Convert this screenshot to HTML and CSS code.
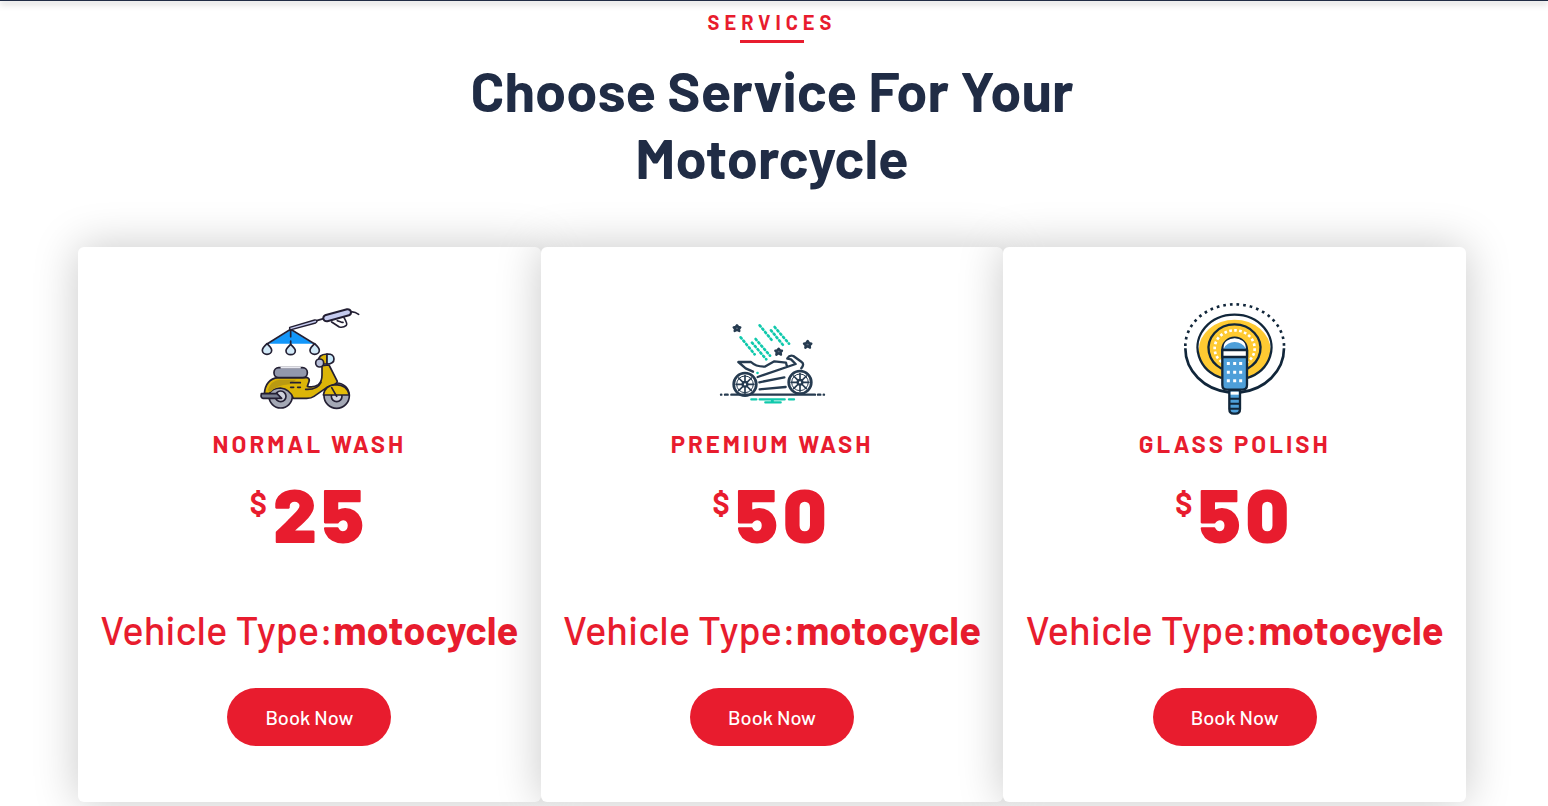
FILE: index.html
```html
<!DOCTYPE html>
<html lang="en">
<head>
<meta charset="utf-8">
<meta name="viewport" content="width=device-width, initial-scale=1">
<title>Services</title>
<link rel="stylesheet" href="styles.css">
</head>
<body>
<div class="topbar"></div>
<main class="services">
  <header class="section-header">
    <p class="eyebrow">SERVICES</p>
    <h2 class="heading">Choose Service For Your Motorcycle</h2>
  </header>
  <div class="cards">
    <article class="card">
      <svg class="icon" viewBox="-9 0 375 375" fill="none" stroke="#231f33" stroke-width="5" stroke-linecap="round" stroke-linejoin="round" aria-hidden="true">
        <path d="M122 105L55 146H190Z" fill="#1397fa" stroke="none"/>
        <path d="M122 103L51 147M122 103L194 147M122 105V125M122 138V150"/>
        <path d="M119 97L194 75Q200 74 201 79Q201 82 197 84L124 104Q117 103 119 97Z" fill="#c5cbef" stroke-width="4"/>
        <path d="M200 77L223 70M301 52Q311 48 326 58" stroke-width="5"/>
        <path d="M245 81L268 96Q280 99 289 91Q293 86 282 68M262 77L271 80Q275 83 279 82" fill="#fff" stroke-width="5"/>
        <path d="M225 61L291 43Q300 42 303 50Q304 58 297 61L232 79Q223 80 220 72Q219 64 225 61Z" fill="#c5cbef" stroke-width="6"/>
        <g fill="#d1e9f8" stroke-width="5">
          <path d="M51 146Q37 159 37 166A14 12 0 0 0 65 166Q65 159 51 146Z"/>
          <path d="M122 148Q108 161 108 167A14 12 0 0 0 136 167Q136 161 122 148Z"/>
          <path d="M194 146Q180 159 180 166A14 12 0 0 0 208 166Q208 159 194 146Z"/>
        </g>
        <circle cx="92" cy="304" r="35" fill="#a4a8b5"/>
        <circle cx="92" cy="304" r="16" fill="#cfd1db"/>
        <circle cx="260" cy="302" r="38" fill="#a4a8b5"/>
        <circle cx="260" cy="304" r="16" fill="#d3d5de"/>
        <path d="M43 296Q47 252 84 248H173Q180 252 177 260L172 274Q191 279 205 269Q216 260 216 240V212L237 210L262 259Q262 264 254 268L234 275L192 304Q184 310 170 310H130Q120 282 91 279Q65 281 58 296Z" fill="#dcb508"/>
        <path d="M53 286Q63 255 91 254H139L119 268Q80 270 62 291Z" fill="#b99a12" stroke="none"/>
        <path d="M220 300Q224 271 257 269Q292 270 298 300Z" fill="#e4bd09"/>
        <path d="M245 278L260 304"/>
        <path d="M34 296H81L95 310H39Q31 309 34 296Z" fill="#777d90"/>
        <rect x="72" y="218" width="100" height="30" rx="14" fill="#9298ac"/>
        <path d="M94 218H150" stroke="#e8e9f1"/>
        <path d="M122 263H151M143 277H151M122 277H131M167 283Q202 285 213 262"/>
        <path d="M206 199Q204 178 231 177V207H216Z" fill="#dcb508"/>
        <path d="M231 177Q252 176 252 192Q252 207 231 207Z" fill="#c7e8fa"/>
        <circle cx="209" cy="204" r="12" fill="#b8bfd8"/>
      </svg>
      <h3 class="title">NORMAL WASH</h3>
      <p class="price"><span class="currency">$</span>25</p>
      <p class="vehicle">Vehicle Type:<strong>motocycle</strong></p>
      <a class="book" href="#book">Book Now</a>
    </article>
    <article class="card">
      <svg class="icon" viewBox="-3 0 375 375" fill="none" stroke="#263b50" stroke-width="7" stroke-linecap="round" stroke-linejoin="round" aria-hidden="true">
        <g stroke="#10c9ac" stroke-width="8" stroke-dasharray="4 9">
          <path d="M149 91L190 141M183 106L224 156M194 96L237 146M92 127L134 178M126 143L169 193M137 132L180 182"/>
        </g>
        <g fill="#596779" stroke-width="7">
          <path d="M81 91L85 96L91 97L87 102L88 108L81 105L74 108L75 102L71 97L77 96Z"/>
          <path d="M206 161L210 166L216 167L212 172L213 179L206 175L199 179L200 172L196 167L202 166Z"/>
          <path d="M293 138L297 144L304 146L299 151L300 158L293 154L286 158L287 151L282 146L289 144Z"/>
        </g>
        <circle cx="105" cy="268" r="34" stroke-width="8"/>
        <circle cx="105" cy="268" r="25" stroke-width="3"/>
        <circle cx="105" cy="268" r="7"/>
        <path d="M105 261V241M105 275V295M98 268H78M112 268H132M100 263L86 249M110 273L124 287M110 263L124 249M100 273L86 287" stroke-width="5"/>
        <circle cx="270" cy="262" r="34" stroke-width="8"/>
        <circle cx="270" cy="262" r="25" stroke-width="3"/>
        <circle cx="270" cy="262" r="7"/>
        <path d="M270 255V235M270 269V289M263 262H243M277 262H297M265 257L251 243M275 267L289 281M275 257L289 243M265 267L251 281" stroke-width="5"/>
        <path d="M129 230L107 220L85 201H123Q137 215 164 215L193 199L228 203L231 215M232 190Q239 179 250 183L275 201Q284 207 274 220M232 191L243 193L257 207L143 246M148 262L223 247M149 283L227 276"/>
        <path d="M64 299H315M33 299H34M45 299H53M324 299H331M341 299H342"/>
        <path d="M124 313H139M149 313H224M237 313H252M166 322H212M186 318H188" stroke="#10c9ac"/>
        <path d="M142 234H143" stroke="#10c9ac"/>
      </svg>
      <h3 class="title">PREMIUM WASH</h3>
      <p class="price"><span class="currency">$</span>50</p>
      <p class="vehicle">Vehicle Type:<strong>motocycle</strong></p>
      <a class="book" href="#book">Book Now</a>
    </article>
    <article class="card">
      <svg class="icon" viewBox="-9 0 375 375" fill="none" stroke="#11263a" stroke-width="7" stroke-linejoin="round" aria-hidden="true">
        <ellipse cx="179" cy="166" rx="108" ry="92" fill="#ffca32" stroke="none"/>
        <path d="M74 130Q105 72 180 69Q135 69 92 99Z" fill="#fff" stroke="none"/>
        <path d="M140 249A111 98 0 1 1 217 249"/>
        <path d="M140 221A78 71 0 1 1 217 221"/>
        <path d="M140 201Q119 185 119 160A60 54 0 0 1 239 160Q239 185 217 201" stroke="#fff" stroke-width="8" stroke-dasharray="8 7"/>
        <path d="M31 153A148 125 0 0 1 327 153" stroke-width="8" stroke-dasharray="8 12"/>
        <path d="M31 160A148 133 0 0 0 162 292M327 160A148 133 0 0 1 196 292" stroke-width="8"/>
        <path d="M142 165A37 37 0 0 1 216 165V270Q216 284 202 284H156Q142 284 142 270Z" fill="#4e9fd9"/>
        <path d="M146 161V156A33 26 0 0 1 212 156V161Q202 141 179 141Q156 141 146 161Z" fill="#fff" stroke="none"/>
        <path d="M142 165H216V186H142Z" fill="#fff"/>
        <path d="M160 201V262M179 201V262M197 201V262" stroke="#fff" stroke-width="9" stroke-dasharray="9 17"/>
        <path d="M163 286H195V342Q195 356 182 356H176Q163 356 163 342Z" fill="#4e9fd9"/>
        <path d="M167 290H191V299H167Z" fill="#fff" stroke="none"/>
        <path d="M165 311H193M165 326H193M165 341H193" stroke-width="6"/>
      </svg>
      <h3 class="title">GLASS POLISH</h3>
      <p class="price"><span class="currency">$</span>50</p>
      <p class="vehicle">Vehicle Type:<strong>motocycle</strong></p>
      <a class="book" href="#book">Book Now</a>
    </article>
  </div>
</main>
</body>
</html>
```
FILE: styles.css
```css
* { box-sizing: border-box; }

body {
  margin: 0;
  background: #fff;
  color: #202c45;
  font-family: Barlow, Roboto, sans-serif;
}

.topbar {
  height: 1px;
  background: #202c45;
  box-shadow: 0 2px 6px rgba(0, 0, 0, 0.6);
}

.services { padding: 9px 82px 4px 78px; }

.section-header {
  display: flex;
  flex-direction: column;
  align-items: center;
  margin-bottom: 57px;
  text-align: center;
}

.eyebrow {
  display: flex;
  flex-direction: column;
  align-items: center;
  gap: 6px;
  margin: 0 0 13px;
  color: #e81c2e;
  font-size: 20px;
  font-weight: 700;
  line-height: 24px;
  letter-spacing: 5px;
}

.eyebrow::after {
  content: "";
  width: 64px;
  height: 3px;
  background: #e81c2e;
}

.heading {
  max-width: 700px;
  margin: 0;
  font-size: 56px;
  font-weight: 700;
  line-height: 67px;
}

.cards {
  display: grid;
  grid-template-columns: repeat(3, 1fr);
}

.card {
  display: flex;
  flex-direction: column;
  align-items: center;
  padding: 48px 0 56px;
  border-radius: 6px;
  background: #fff;
  box-shadow: 0 0 45px rgba(0, 0, 0, 0.22);
  color: #e81c2e;
}

.icon {
  width: 125px;
  height: 125px;
}

.title {
  margin: 10px 0 17px;
  font-size: 24px;
  font-weight: 700;
  line-height: 28px;
  letter-spacing: 3px;
}

.price {
  display: flex;
  align-items: flex-start;
  gap: 1px;
  margin: 0 0 54px;
  font-size: 76px;
  font-weight: 900;
  line-height: 76px;
  letter-spacing: 5px;
}

.currency {
  padding-top: 11px;
  font-size: 30px;
  font-weight: 700;
  line-height: 32px;
}

.vehicle {
  margin: 0 0 35px;
  font-size: 40px;
  font-weight: 500;
  line-height: 48px;
  white-space: nowrap;
}

.book {
  padding: 0 38px;
  border-radius: 29px;
  background: #e81c2e;
  color: #fff;
  font-size: 20px;
  font-weight: 500;
  line-height: 58px;
  text-decoration: none;
}
```
